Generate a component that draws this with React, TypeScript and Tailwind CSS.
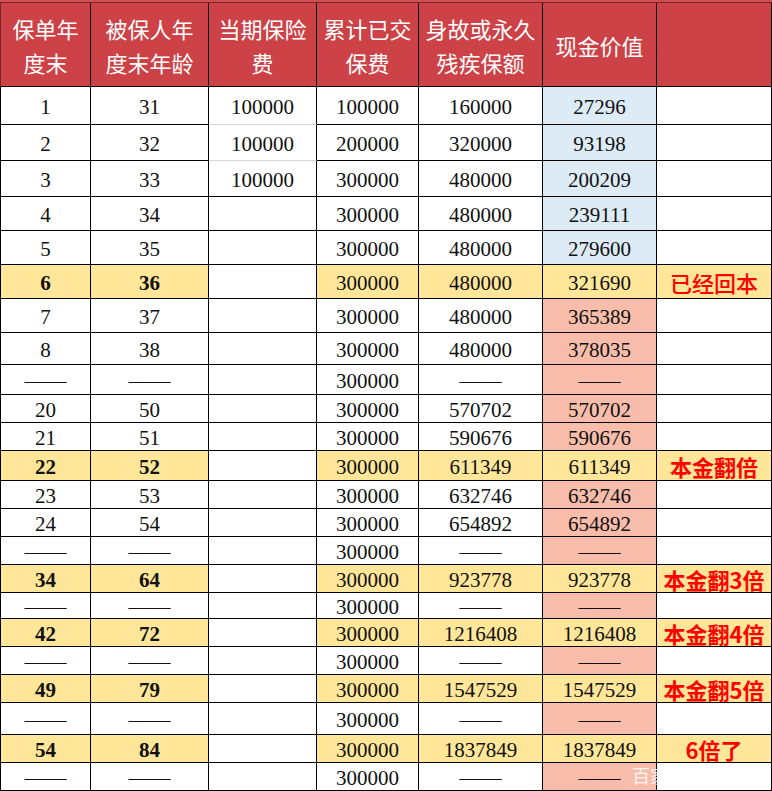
import React from "react";

type Row = {
  h: string;
  year: string;
  age: string;
  premium?: string;
  paid: string;
  cover: string;
  cash: string;
  cashBg?: "blue" | "salmon";
  hl?: boolean;
  note?: string;
};

const D = "——";

const rows: Row[] = [
  { h: "h-[38px]", year: "1", age: "31", premium: "100000", paid: "100000", cover: "160000", cash: "27296", cashBg: "blue" },
  { h: "h-[36px]", year: "2", age: "32", premium: "100000", paid: "200000", cover: "320000", cash: "93198", cashBg: "blue" },
  { h: "h-[36px]", year: "3", age: "33", premium: "100000", paid: "300000", cover: "480000", cash: "200209", cashBg: "blue" },
  { h: "h-[34px]", year: "4", age: "34", paid: "300000", cover: "480000", cash: "239111", cashBg: "blue" },
  { h: "h-[34px]", year: "5", age: "35", paid: "300000", cover: "480000", cash: "279600", cashBg: "blue" },
  { h: "h-[34px]", year: "6", age: "36", paid: "300000", cover: "480000", cash: "321690", hl: true, note: "已经回本" },
  { h: "h-[34px]", year: "7", age: "37", paid: "300000", cover: "480000", cash: "365389", cashBg: "salmon" },
  { h: "h-[32px]", year: "8", age: "38", paid: "300000", cover: "480000", cash: "378035", cashBg: "salmon" },
  { h: "h-[30px]", year: D, age: D, paid: "300000", cover: D, cash: D, cashBg: "salmon" },
  { h: "h-[28px]", year: "20", age: "50", paid: "300000", cover: "570702", cash: "570702", cashBg: "salmon" },
  { h: "h-[28px]", year: "21", age: "51", paid: "300000", cover: "590676", cash: "590676", cashBg: "salmon" },
  { h: "h-[30px]", year: "22", age: "52", paid: "300000", cover: "611349", cash: "611349", hl: true, note: "本金翻倍" },
  { h: "h-[28px]", year: "23", age: "53", paid: "300000", cover: "632746", cash: "632746", cashBg: "salmon" },
  { h: "h-[28px]", year: "24", age: "54", paid: "300000", cover: "654892", cash: "654892", cashBg: "salmon" },
  { h: "h-[28px]", year: D, age: D, paid: "300000", cover: D, cash: D, cashBg: "salmon" },
  { h: "h-[28px]", year: "34", age: "64", paid: "300000", cover: "923778", cash: "923778", hl: true, note: "本金翻3倍" },
  { h: "h-[26px]", year: D, age: D, paid: "300000", cover: D, cash: D, cashBg: "salmon" },
  { h: "h-[28px]", year: "42", age: "72", paid: "300000", cover: "1216408", cash: "1216408", hl: true, note: "本金翻4倍" },
  { h: "h-[28px]", year: D, age: D, paid: "300000", cover: D, cash: D, cashBg: "salmon" },
  { h: "h-[28px]", year: "49", age: "79", paid: "300000", cover: "1547529", cash: "1547529", hl: true, note: "本金翻5倍" },
  { h: "h-[32px]", year: D, age: D, paid: "300000", cover: D, cash: D, cashBg: "salmon" },
  { h: "h-[28px]", year: "54", age: "84", paid: "300000", cover: "1837849", cash: "1837849", hl: true, note: "6倍了" },
  { h: "h-[28px]", year: D, age: D, paid: "300000", cover: D, cash: D, cashBg: "salmon" },
];

const cols = "grid grid-cols-[90px_118px_108px_102px_124px_114px_115px]";
const cell = "flex items-center justify-center border-r border-b border-black";
const num = "pt-[4px] font-['Liberation_Serif',serif] text-[21px] leading-none text-[#111]";

const App = () => {
  return (
    <div className="w-[772px] h-[791px] overflow-hidden bg-white relative">
      <div className="h-[2px] bg-[#d24e52]" />
      <div
        className={`${cols} h-[85px] border-t border-l border-[#7a2326] bg-[#cc4246] text-white font-['Noto_Sans_CJK_SC',sans-serif] text-[22px] leading-[34px]`}
      >
        <div className={`${cell} text-center`}>保单年<br />度末</div>
        <div className={`${cell} text-center`}>被保人年<br />度末年龄</div>
        <div className={`${cell} text-center`}>当期保险<br />费</div>
        <div className={`${cell} text-center`}>累计已交<br />保费</div>
        <div className={`${cell} text-center`}>身故或永久<br />残疾保额</div>
        <div className={`${cell} text-center`}>现金价值</div>
        <div className={cell} />
      </div>

      {rows.map((r, i) => {
        const yellow = r.hl ? "bg-[#ffe699]" : "bg-white";
        const cashBg = r.hl
          ? "bg-[#ffe699]"
          : r.cashBg === "blue"
          ? "bg-[#ddebf7]"
          : "bg-[#f8bcaa]";
        const premBorder = i < 2 ? "border-b-[#d4d4d4]" : "";
        const bold = r.hl ? "font-bold" : "";
        return (
          <div key={i} className={`${cols} ${r.h} border-l border-black`}>
            <div className={`${cell} ${yellow} ${num} ${bold}`}>{r.year}</div>
            <div className={`${cell} ${yellow} ${num} ${bold}`}>{r.age}</div>
            <div className={`${cell} bg-white ${num} ${premBorder}`}>{r.premium}</div>
            <div className={`${cell} ${yellow} ${num}`}>{r.paid}</div>
            <div className={`${cell} ${yellow} ${num}`}>{r.cover}</div>
            <div className={`${cell} ${cashBg} ${num}`}>{r.cash}</div>
            <div
              className={`${cell} ${yellow} font-['Noto_Sans_CJK_SC',sans-serif] text-[22px] leading-none text-[#ff0000] whitespace-nowrap ${
                r.note === "已经回本" ? "font-medium" : "font-bold"
              }`}
            >
              {r.note}
            </div>
          </div>
        );
      })}

      {/* watermark over the last rows */}
      <div className="absolute left-[632px] top-[766px] font-['Noto_Sans_CJK_SC',sans-serif] text-[18px] leading-none text-white/85 whitespace-nowrap">
        百家号/旧近儿
      </div>
    </div>
  );
};

export default App;
